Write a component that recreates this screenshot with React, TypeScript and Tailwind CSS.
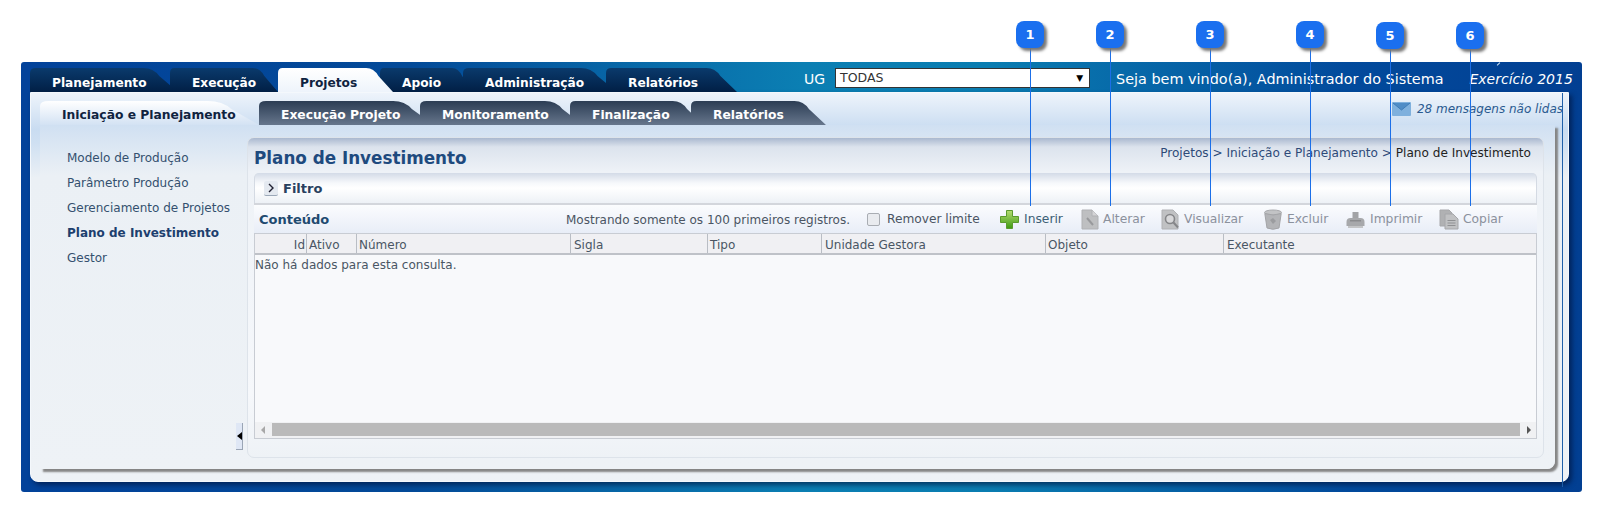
import type { ReactNode } from "react";

const topTabs = [
  { label: "Planejamento", cls: "w-[148px] z-[1]" },
  { label: "Execução", cls: "w-[108px] -ml-[8px] z-[2]" },
  { label: "Projetos", cls: "w-[115px] z-[9]", active: true },
  { label: "Apoio", cls: "w-[94px] -ml-[13px] z-[4]" },
  { label: "Administração", cls: "w-[154px] -ml-[11px] z-[5]" },
  { label: "Relatórios", cls: "w-[131px] -ml-[11px] z-[6]" },
];

const subTabs = [
  { label: "Iniciação e Planejamento", cls: "w-[219px] z-[9]", active: true },
  { label: "Execução Projeto", cls: "w-[175px] z-[4]" },
  { label: "Monitoramento", cls: "w-[163px] -ml-[14px] z-[5]" },
  { label: "Finalização", cls: "w-[134px] -ml-[13px] z-[6]" },
  { label: "Relatórios", cls: "w-[135px] -ml-[13px] z-[7]" },
];

const sideItems = ["Modelo de Produção", "Parâmetro Produção", "Gerenciamento de Projetos", "Plano de Investimento", "Gestor"];

const columns = [
  { label: "Id", cls: "w-[52px] text-right pr-[1px]" },
  { label: "Ativo", cls: "w-[50px] pl-[2px]" },
  { label: "Número", cls: "w-[214px] pl-[2px]" },
  { label: "Sigla", cls: "w-[137px] pl-[3px]" },
  { label: "Tipo", cls: "w-[114px] pl-[2px]" },
  { label: "Unidade Gestora", cls: "w-[224px] pl-[3px]" },
  { label: "Objeto", cls: "w-[178px] pl-[2px]" },
  { label: "Executante", cls: "flex-1 pl-[3px]" },
];

const callouts = [
  { n: 1, x: "left-[1016px]", top: "top-[21px]", line: "left-[1030px]" },
  { n: 2, x: "left-[1096px]", top: "top-[21px]", line: "left-[1110px]" },
  { n: 3, x: "left-[1196px]", top: "top-[21px]", line: "left-[1210px]" },
  { n: 4, x: "left-[1296px]", top: "top-[21px]", line: "left-[1310px]" },
  { n: 5, x: "left-[1376px]", top: "top-[22px]", line: "left-[1390px]" },
  { n: 6, x: "left-[1456px]", top: "top-[22px]", line: "left-[1470px]" },
];

const Tab = ({ label, cls, active, sub }: { label: string; cls: string; active?: boolean; sub?: boolean }) => {
  const id = label.replace(/[^a-zA-Z]/g, "") + (sub ? "S" : "T");
  const w = 300;
  return (
    <div className={`relative h-[24px] shrink-0 ${cls}`}>
      <svg className="absolute inset-0 h-full w-full" viewBox={`0 0 ${w} 24`} preserveAspectRatio="none">
        <defs>
          <linearGradient id={id} x1="0" y1="0" x2="0" y2="1">
            {active ? (
              <>
                <stop offset="0" stopColor="#ffffff" />
                <stop offset="1" stopColor={sub ? "#d3e2f3" : "#eef4fb"} />
              </>
            ) : sub ? (
              <>
                <stop offset="0" stopColor="#2c3d54" />
                <stop offset="1" stopColor="#66768c" />
              </>
            ) : (
              <>
                <stop offset="0" stopColor="#0a3a6c" />
                <stop offset="1" stopColor="#011f45" />
              </>
            )}
          </linearGradient>
        </defs>
        <path d={`M0 24 V5 Q0 0 12 0 H${w - 70} Q${w - 50} 0 ${w - 38} 8 L${w} 24 Z`} fill={`url(#${id})`} />
      </svg>
      <span
        className={`absolute left-[22px] whitespace-nowrap leading-[16px] font-bold ${sub ? "top-[6px] text-[12.3px]" : "top-[7px] text-[12.2px]"} ${
          active ? "text-[#10233f]" : "text-white"
        }`}
      >
        {label}
      </span>
    </div>
  );
};

const PlusIcon = () => (
  <svg width="21" height="21" viewBox="0 0 21 21">
    <defs>
      <linearGradient id="plusFill" x1="0" y1="0" x2="0" y2="1">
        <stop offset="0" stopColor="#b5dc72" />
        <stop offset="1" stopColor="#3f9a12" />
      </linearGradient>
    </defs>
    <path d="M7.5 1.5h6v6h6v6h-6v6h-6v-6h-6v-6h6z" fill="url(#plusFill)" stroke="#5b9a2c" strokeWidth="1" strokeLinejoin="round" />
  </svg>
);

const EditIcon = () => (
  <svg width="18" height="21" viewBox="0 0 18 21">
    <path d="M1 1h10l6 6v13H1z" fill="#bebfc1" stroke="#b0b1b4" />
    <path d="M11 1v6h6" fill="#d4d4d6" stroke="#b0b1b4" />
    <path d="M6 9l6 7" stroke="#98999c" strokeWidth="2" />
  </svg>
);

const ViewIcon = () => (
  <svg width="19" height="21" viewBox="0 0 19 21">
    <path d="M1 1h11l5 5v14H1z" fill="#c0c1c3" stroke="#b0b1b4" />
    <circle cx="9" cy="10" r="4.5" fill="#d8d8da" stroke="#858689" strokeWidth="1.6" />
    <path d="M12.5 13.5l4.5 5" stroke="#858689" strokeWidth="2" />
  </svg>
);

const TrashIcon = () => (
  <svg width="20" height="21" viewBox="0 0 20 21">
    <ellipse cx="10" cy="3.5" rx="8.5" ry="2.5" fill="#c2c3c5" stroke="#a8a9ac" />
    <path d="M1.8 4.5L4 19q6 2.5 12 0l2.2-14.5q-8 3-16.4 0z" fill="#b3b4b7" stroke="#a3a4a7" />
    <path d="M7 11l3-2 3 3-3 3z" fill="#9b9c9f" />
  </svg>
);

const PrintIcon = () => (
  <svg width="21" height="21" viewBox="0 0 21 21">
    <path d="M7.5 3h6v6h-6z" fill="#a2a3a6" />
    <path d="M1.5 13q0-4 4-4h10q4 0 4 4v4h-18z" fill="#a7a8ab" />
    <path d="M3 17h15v2H3z" fill="#c3c4c6" />
    <path d="M5 11h11v1.5H5z" fill="#8a8b8e" />
  </svg>
);

const CopyIcon = () => (
  <svg width="20" height="21" viewBox="0 0 20 21">
    <path d="M1 1h9l3 3v13H1z" fill="#b0b1b3" stroke="#a6a7aa" />
    <path d="M6 5h8l5 5v10H6z" fill="#c0c1c3" stroke="#a6a7aa" />
    <path d="M8.5 11.5h8M8.5 14h8M8.5 16.5h8" stroke="#8f9093" />
  </svg>
);

const Action = ({ icon, label, cls, text }: { icon: ReactNode; label: string; cls: string; text?: string }) => (
  <div className={`flex shrink-0 items-center ${cls}`}>
    {icon}
    <span className={`ml-[4px] whitespace-nowrap text-[12.3px] ${text ?? "text-[#8b919d]"}`}>{label}</span>
  </div>
);

export default function App() {
  return (
    <div className="relative h-[507px] w-[1597px] overflow-hidden bg-white pt-[62px] pl-[21px] font-['DejaVu_Sans',sans-serif] text-[12px] text-[#44505e]">
      {/* moldura azul */}
      <div className="flex h-[430px] w-[1561px] flex-col rounded-[3px] bg-[linear-gradient(90deg,#02429a_0%,#034a98_25%,#0b7fb3_50%,#0a7db1_62%,#024a9c_85%,#023f92_100%)]">
        <div className="flex h-[30px] shrink-0 pl-[9px] pt-[6px]">
          <div className="flex w-[707px] shrink-0">
            {topTabs.map((t) => (
              <Tab key={t.label} {...t} />
            ))}
          </div>
          <span className="ml-[67px] mt-[1px] text-[14px] leading-[20px] text-white">UG</span>
          <div className="ml-[10px] flex h-[20px] w-[255px] items-center justify-between border border-[#333] bg-white pl-[4px] pr-[6px] pt-[1px] text-[12.5px] text-[#333]">
            TODAS
            <span className="text-[9px] text-black">▼</span>
          </div>
          <span className="ml-[26px] mt-[1px] whitespace-nowrap text-[14.4px] leading-[20px] text-white">
            Seja bem vindo(a), Administrador do Sistema
          </span>
          <span className="ml-[26px] mt-[1px] whitespace-nowrap text-[14px] leading-[20px] italic text-white">Exercício 2015</span>
        </div>

        <div className="flex flex-1">
          <div className="ml-[9px] flex h-[390px] w-[1539px] flex-col rounded-bl-lg rounded-br-lg border border-[#f4f8fc] bg-[linear-gradient(180deg,#eef4fb_0px,#c9dcf1_36px,#cfe0f2_50px,#ebf0f5_85px,#eef2f6_100%)] shadow-[3px_3px_5px_rgba(0,20,60,0.65)]">
            <div className="flex h-[32px] shrink-0 pl-[9px] pt-[8px]">
              {subTabs.map((t) => (
                <Tab key={t.label} {...t} sub />
              ))}
              <div className="ml-auto flex items-start">
                <svg className="mt-[1px]" width="19" height="14" viewBox="0 0 19 14">
                  <rect width="19" height="14" rx="1" fill="#7fb0dd" />
                  <path d="M1 1l8.5 7L18 1" fill="#4f8cc6" stroke="#3f7cb8" />
                </svg>
                <span className="ml-[6px] mr-[5px] whitespace-nowrap text-[12px] leading-[16px] italic text-[#2a5a90]">
                  28 mensagens não lidas
                </span>
              </div>
            </div>

            <div className="flex h-[344px] w-[1515px] ml-[9px] rounded-br-lg bg-[linear-gradient(180deg,#d0e0f2_0px,#ebf0f5_50px,#eef2f6_100%)] pt-[12px] pr-[11px] pb-[11px] shadow-[3px_3px_2px_#858585]">
              {/* menu lateral */}
              <div className="relative w-[207px] shrink-0 pl-[27px] pt-[13px] text-[#34506f]">
                {sideItems.map((item, i) => (
                  <div key={item} className={`h-[25px] whitespace-nowrap leading-[17px] ${i === 3 ? "font-bold text-[#1d3f6e]" : ""}`}>
                    {item}
                  </div>
                ))}
                <div className="absolute right-[4px] bottom-[8px] flex h-[27px] w-[7px] items-center justify-center border border-[#9aa5b5] border-t-0 border-l-0 bg-[#dfe7f5]">
                  <span className="h-0 w-0 border-y-[4px] border-r-[5px] border-y-transparent border-r-black" />
                </div>
              </div>

              {/* painel */}
              <div className="flex flex-1 flex-col rounded-[7px] border border-[#dde3ea] bg-[linear-gradient(180deg,#aab8cf_0px,#dce3ed_9px,#eef2f7_34px,#f6f8fb_80%,#eef2f6_100%)] px-[6px]">
                <div className="flex h-[35px] shrink-0 items-end justify-between pb-[3px]">
                  <span className="text-[16.8px] leading-[24px] font-bold text-[#1e4a7e]">Plano de Investimento</span>
                  <span className="mb-[9px] mr-[6px] whitespace-nowrap text-[12.1px] leading-[16px] text-[#2e4a78]">
                    Projetos &gt; Iniciação e Planejamento &gt; <span className="text-[#222]">Plano de Investimento</span>
                  </span>
                </div>

                <div className="flex h-[30px] shrink-0 items-center rounded-t-[5px] border-x border-[#d4dae3] bg-[linear-gradient(180deg,#d3dbe7_0px,#f6f8fb_10px,#ffffff_15px,#edf1f6_100%)] pl-[9px] pt-[1px]">
                  <span className="flex h-[15px] w-[14px] items-center justify-center rounded-[2px] border-b border-[#9ba8b8] bg-[#e4e9f0]">
                    <svg width="8" height="10" viewBox="0 0 8 10">
                      <path d="M2 1l4 4-4 4" fill="none" stroke="#223" strokeWidth="1.4" />
                    </svg>
                  </span>
                  <span className="ml-[5px] text-[13px] font-bold text-[#29415f]">Filtro</span>
                </div>

                <div className="flex h-[30px] shrink-0 items-center border-t-2 border-[#d3d6dc] bg-[linear-gradient(180deg,#fbfcfe,#e8edf7)] pl-[5px] pt-[1px]">
                  <span className="mt-[1px] w-[307px] shrink-0 text-[13px] font-bold text-[#1f4a70]">Conteúdo</span>
                  <span className="w-[301px] shrink-0 whitespace-nowrap text-[12px] text-[#4b5563]">Mostrando somente os 100 primeiros registros.</span>
                  <span className="h-[13px] w-[13px] shrink-0 rounded-[2px] border border-[#a9adb3] bg-[#e9ebef]" />
                  <span className="ml-[7px] w-[112px] shrink-0 whitespace-nowrap text-[12.2px] text-[#4b5563]">Remover limite</span>
                  <Action cls="w-[82px]" icon={<PlusIcon />} label="Inserir" text="text-[#3c5f75]" />
                  <Action cls="w-[80px]" icon={<EditIcon />} label="Alterar" />
                  <Action cls="w-[102px]" icon={<ViewIcon />} label="Visualizar" />
                  <Action cls="w-[82px]" icon={<TrashIcon />} label="Excluir" />
                  <Action cls="w-[94px]" icon={<PrintIcon />} label="Imprimir" />
                  <Action cls="w-[70px]" icon={<CopyIcon />} label="Copiar" />
                </div>

                <div className="flex h-[206px] shrink-0 flex-col border border-[#c8ccd3] bg-[#f8f9fb]">
                  <div className="flex h-[21px] shrink-0 border-b-2 border-[#bfc2c8] bg-[#f0f0f3] text-[#4a5664]">
                    {columns.map((c) => (
                      <div key={c.label} className={`shrink-0 border-r border-[#b9bdc4] leading-[22px] last:border-r-0 ${c.cls}`}>
                        {c.label}
                      </div>
                    ))}
                  </div>
                  <div className="flex-1 leading-[21px] text-[#4a5664]">Não há dados para esta consulta.</div>
                  <div className="flex h-[16px] shrink-0 items-center bg-[#f0f1f3] pb-[1px]">
                    <span className="ml-[6px] h-0 w-0 border-y-[4px] border-r-[4px] border-y-transparent border-r-[#a8a8a8]" />
                    <span className="ml-[7px] h-[13px] flex-1 bg-[#bababa]" />
                    <span className="ml-[7px] mr-[5px] h-0 w-0 border-y-[4px] border-l-[4px] border-y-transparent border-l-[#555]" />
                  </div>
                </div>
              </div>
            </div>
          </div>
        </div>
      </div>

      {/* marcadores */}
      {callouts.map((c) => (
        <div key={c.n}>
          <span className={`absolute top-[48px] h-[158px] w-px bg-[#1b6fe8] ${c.line}`} />
          <div
            className={`absolute flex h-[27px] w-[28px] items-center justify-center rounded-[8px] bg-[#1a6fef] text-[13px] font-bold text-white shadow-[3px_3px_3px_#777] ${c.x} ${c.top}`}
          >
            {c.n}
          </div>
        </div>
      ))}
      <span className="absolute left-[1562px] top-[93px] h-[394px] w-px bg-[#1f5fa8]" />
      <span className="absolute left-[1498px] top-[62px] h-[4px] w-px rotate-45 bg-[#cfe3f5]" />
    </div>
  );
}
